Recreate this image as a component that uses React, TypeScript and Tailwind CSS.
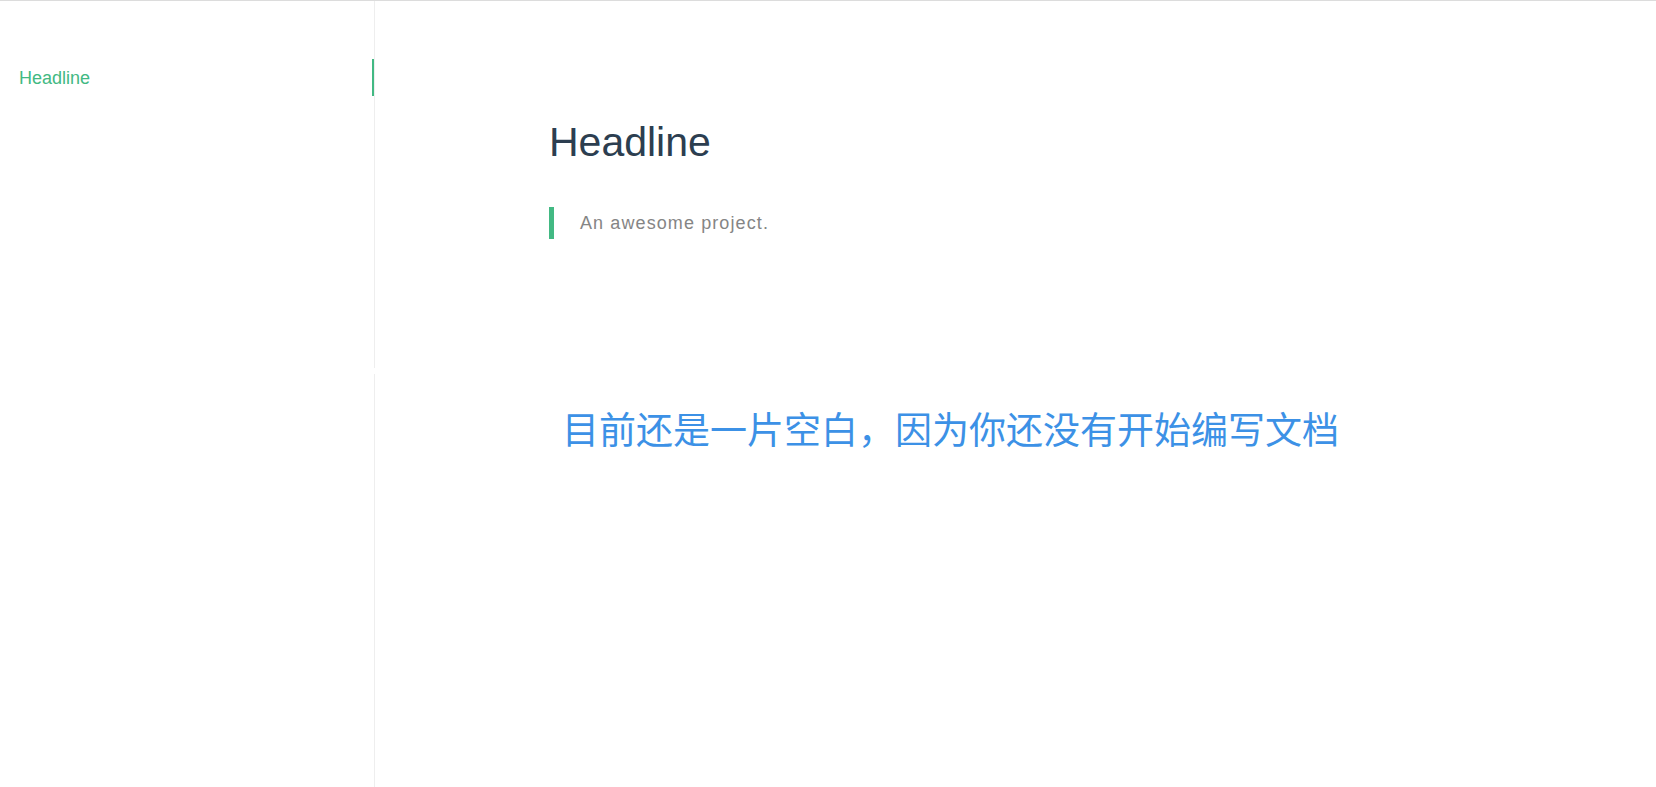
import React from "react";

const latin = "font-['Liberation_Sans',Arial,sans-serif]";

function Sidebar() {
  return (
    <aside className="flex w-[375px] shrink-0 flex-col">
      <div className="h-[367px] border-r border-[#eeeeee] pt-[58px]">
        <a
          href="#/"
          className={`relative block h-[37px] pl-[19px] text-[18px] leading-[39px] text-[#42b983] ${latin}`}
        >
          Headline
          <span className="absolute right-0 top-0 h-[37px] w-[2px] bg-[#42b983]" />
        </a>
      </div>
      <div className="h-[6px]" />
      <div className="flex-1 border-r border-[#eeeeee]" />
    </aside>
  );
}

function Content() {
  return (
    <main className="flex-1 pl-[174px] pt-[121px]">
      <h1 className={`text-[41px] font-normal leading-none text-[#2c3e50] ${latin}`}>
        Headline
      </h1>
      <blockquote className="mt-[44px] h-[32px] border-l-[5px] border-[#42b983] pl-[26px]">
        <p
          className={`text-[18px] leading-[32px] tracking-[1.1px] text-[#858585] ${latin}`}
        >
          An awesome project.
        </p>
      </blockquote>
      <p className="mt-[171px] pl-[13px] font-['Noto_Sans_CJK_SC',sans-serif] text-[37px] leading-none text-[#3c91e6]">
        目前还是一片空白，因为你还没有开始编写文档
      </p>
    </main>
  );
}

export default function App() {
  return (
    <div className="flex h-[787px] w-full border-t border-[#dcdcdc] bg-white">
      <Sidebar />
      <Content />
    </div>
  );
}
